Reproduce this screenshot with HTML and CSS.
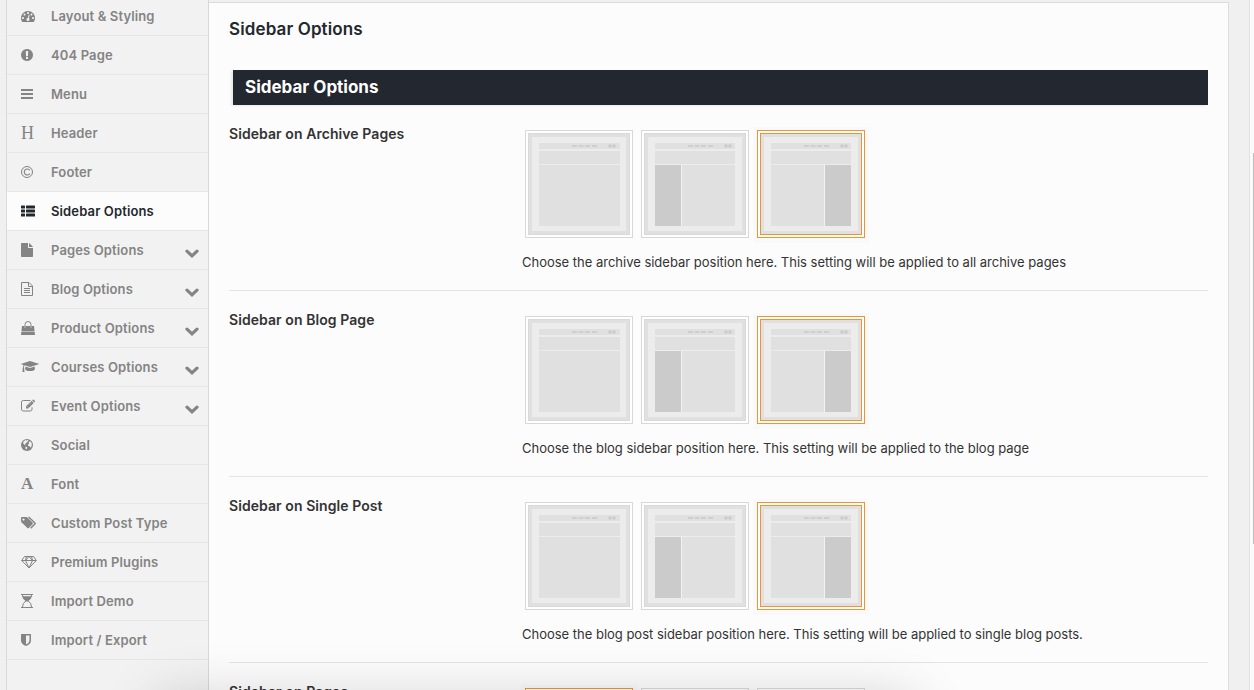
FILE: index.html
```
<!DOCTYPE html>
<html lang="en">
<head>
<meta charset="utf-8">
<title>Sidebar Options</title>
<link rel="stylesheet" href="styles.css">
</head>
<body>
<svg class="defs" width="0" height="0">
  <symbol id="tile-base" viewBox="0 0 102 102">
    <rect width="102" height="102" fill="#d9d9d9"/>
    <rect x="1" y="1" width="100" height="100" fill="#e0e0e0"/>
    <rect x="4" y="4" width="94" height="94" fill="#ececec"/>
    <rect x="11" y="10" width="81" height="6" fill="#e0e0e0"/>
    <rect x="11" y="18" width="81" height="13" fill="#e0e0e0"/>
    <rect x="11" y="32" width="81" height="61" fill="#e0e0e0"/>
    <path d="M44 13h5M50.500 13h5M57 13h5M64 13h5" stroke="#cfcfcf" stroke-width="2"/>
    <path d="M80.500 13h3M84.500 13h3" stroke="#cacaca" stroke-width="3"/>
  </symbol>
  <symbol id="tile-none" viewBox="0 0 102 102"><use href="#tile-base"/></symbol>
  <symbol id="tile-left" viewBox="0 0 102 102"><use href="#tile-base"/><path d="M11 32h26v61H11z" fill="#cbcbcb"/><path d="M37 32h1v61h-1z" fill="#f2f2f2"/><path d="M91 10h1v83h-1z" fill="#ececec"/></symbol>
  <symbol id="tile-right" viewBox="0 0 102 102"><use href="#tile-base"/><path d="M65 32h26v61H65z" fill="#cbcbcb"/><path d="M64 32h1v61h-1z" fill="#f2f2f2"/><path d="M91 10h1v83h-1z" fill="#ececec"/></symbol>
  <symbol id="chevron" viewBox="0 0 14 10"><path d="M2 2.200l5 4.700 5-4.700" fill="none" stroke="#848484" stroke-width="3.200" stroke-linecap="round"/></symbol>
</svg>
<div class="page">
  <nav class="menu">
    <a class="item"><svg class="icon" viewBox="0 0 1792 1792"><path d="M384 1152q0-53-37.500-90.500t-90.500-37.500-90.500 37.500-37.500 90.500 37.500 90.500 90.500 37.500 90.500-37.500 37.500-90.500zm192-448q0-53-37.500-90.500t-90.500-37.500-90.500 37.500-37.500 90.500 37.500 90.500 90.500 37.500 90.500-37.500 37.500-90.500zm428 481l101-382q6-26-7.500-48.500t-38.500-29.500-48 6.500-30 39.500l-101 382q-60 5-107 43.500t-63 98.500q-20 77 20 146t117 89 146-20 89-117q16-60-6-117t-72-91zm660-33q0-53-37.500-90.500t-90.500-37.500-90.500 37.500-37.500 90.500 37.500 90.500 90.500 37.500 90.500-37.500 37.500-90.500zm-640-640q0-53-37.500-90.500t-90.500-37.500-90.500 37.500-37.500 90.500 37.500 90.500 90.500 37.500 90.500-37.500 37.500-90.500zm448 192q0-53-37.500-90.500t-90.500-37.500-90.500 37.500-37.500 90.500 37.500 90.500 90.500 37.500 90.500-37.500 37.500-90.500zm320 448q0 261-141 483-19 29-54 29h-1402q-35 0-54-29-141-221-141-483 0-182 71-348t191-286 286-191 348-71 348 71 286 191 191 286 71 348z"/></svg><span>Layout &amp; Styling</span></a>
    <a class="item"><svg class="icon" viewBox="128 0 1792 1792"><path d="M896 128q209 0 385.500 103t279.500 279.500 103 385.500-103 385.500-279.500 279.500-385.500 103-385.500-103-279.500-279.500-103-385.500 103-385.500 279.500-279.500 385.500-103zm128 1247v-190q0-14-9-23.500t-22-9.500h-192q-13 0-23 10t-10 23v190q0 13 10 23t23 10h192q13 0 22-9.500t9-23.500zm-2-344l18-621q0-12-10-18-10-8-24-8h-220q-14 0-24 8-10 6-10 18l17 621q0 10 10 17.500t24 7.500h185q14 0 23.500-7.500t10.500-17.500z"/></svg><span>404 Page</span></a>
    <a class="item"><svg class="icon" viewBox="0 0 14 14"><path d="M0 2h12v2H0zM0 6h12v2H0zM0 10h12v2H0z"/></svg><span>Menu</span></a>
    <a class="item"><span class="icon letter">H</span><span>Header</span></a>
    <a class="item"><svg class="icon" viewBox="0 0 14 14"><g fill="none" stroke="#848484"><circle cx="6" cy="7" r="5.500"/><path d="M8.800 5.400A3 3 0 1 0 8.800 8.600" stroke-width="1.100"/></g></svg><span>Footer</span></a>
    <a class="item active"><svg class="icon" viewBox="0 0 14 14"><rect y="1.500" width="4" height="3" rx=".6"/><rect y="5.500" width="4" height="3" rx=".6"/><rect y="9.500" width="4" height="3" rx=".6"/><rect x="5" y="1.500" width="9" height="3" rx=".6"/><rect x="5" y="5.500" width="9" height="3" rx=".6"/><rect x="5" y="9.500" width="9" height="3" rx=".6"/></svg><span>Sidebar Options</span></a>
    <a class="item"><svg class="icon" viewBox="0 0 14 14"><path d="M.7 0H7v4.300q0 .7.700.7H12v8.300q0 .7-.7.700H.7q-.7 0-.7-.7V.7Q0 0 .7 0zM8 .1q.4.100.7.400l2.800 2.800q.3.300.4.700H8z"/></svg><span>Pages Options</span><svg class="chev"><use href="#chevron"/></svg></a>
    <a class="item"><svg class="icon" viewBox="0 0 14 14"><path d="M.5.500H8l3.500 3.500v9.500H.5zM7.500.5v4h4M3 6.500h6M3 8.500h6M3 10.500h6" fill="none" stroke="#848484"/></svg><span>Blog Options</span><svg class="chev"><use href="#chevron"/></svg></a>
    <a class="item"><svg class="icon" viewBox="0 0 14 14"><path d="M4 6V3.500a3 3 0 0 1 6 0V6" fill="none" stroke="#848484"/><path d="M1 5h2.500v1.500h1V5h5v1.500h1V5H13l.6 5.500H.4zM.3 11h13.400l.3 2.400q0 .6-.6.600H.6q-.6 0-.6-.6z"/></svg><span>Product Options</span><svg class="chev"><use href="#chevron"/></svg></a>
    <a class="item"><svg class="icon wide" viewBox="0 0 18 14"><path d="M9 1l8.700 2.700q.4.200 0 .5L9 7 3.800 5.300Q2.900 6 2.800 7.500q.9.600.3 1.600L3.600 12H1.300l.5-2.900q-.7-.9.200-1.600 0-1.600.7-2.500L.3 4.200q-.4-.3 0-.5zM4.400 6.600L9 8l4.600-1.400.3 2.600Q13.600 11 9 11T4.100 9.200z"/></svg><span>Courses Options</span><svg class="chev"><use href="#chevron"/></svg></a>
    <a class="item"><svg class="icon" viewBox="0 0 14 14"><path d="M9.400 1.500H2.300Q.5 1.500.5 3.300v6.900Q.5 12 2.300 12h6.900Q11 12 11 10.200V8.300" fill="none" stroke="#848484"/><path d="M10.600 1.800l2.100 2.100L7.200 9.500H5V7.300zM11.100 1.300l.6-.6q.5-.4 1 0l1.100 1.100q.4.500 0 1l-.6.600z"/><path d="M6 7.400l1 1" stroke="#f2f2f2" stroke-width=".7"/><path d="M7.300 6.200l3.200-3.200" stroke="#f2f2f2" stroke-width=".4"/></svg><span>Event Options</span><svg class="chev"><use href="#chevron"/></svg></a>
    <a class="item"><svg class="icon" viewBox="0 0 14 14"><circle cx="6" cy="7" r="6"/><path d="M4.600 2l1.300.5.700-.4 1 .4-1 1.100-.8 1-1.200.6-.5 1 .6.800-1.300-.3L2 5l.6-1.600zM8.400 3.500l1.500.3 1 2.300-.4 2.100-1 1.500-.8-1.500L7.200 8l-.2-1.500 1.200-1-.5-.8zM4.500 8.400l1.500.7.300 1-1.100 1.600-.7-1.300z" fill="#f2f2f2"/></svg><span>Social</span></a>
    <a class="item"><span class="icon letter bold">A</span><span>Font</span></a>
    <a class="item"><svg class="icon wide" viewBox="0 0 18 14"><path fill-rule="evenodd" d="M1 1h4.300q.8.100 1.400.7l5 5q.6.700 0 1.400l-3.900 3.900q-.7.600-1.400 0l-5.700-5.600Q0 5.800 0 5V2Q0 1 1 1zm1.500 1.400a1.100 1.100 0 1 0 .01 0z"/><path d="M7.500 1.300q.6.100 1 .5l5.400 5.300q.5.500 0 1L9.700 12.300" fill="none" stroke="#848484" stroke-width="1.400"/></svg><span>Custom Post Type</span></a>
    <a class="item"><svg class="icon wide" viewBox="0 0 18 14"><path d="M3.500 1.500h9L15.300 5.500 8 13 .7 5.500zM.7 5.500h14.600M5.500 1.500l-1 4L8 13l3.500-7.500-1-4M4.500 5.500L8 1.500l3.500 4" fill="none" stroke="#848484" stroke-linejoin="round"/></svg><span>Premium Plugins</span></a>
    <a class="item"><svg class="icon" viewBox="0 0 14 14"><path d="M0 0h12v1H0zM0 13h12v1H0zM1 1h10q0 3.600-3.700 6h-2.600Q1 4.600 1 1z"/><path d="M1.500 13q0-3.800 3.300-6h2.400q3.300 2.200 3.300 6" fill="none" stroke="#848484"/><path d="M2 1h8l-.3 1.200H2.300z" fill="#f2f2f2"/></svg><span>Import Demo</span></a>
    <a class="item"><svg class="icon" viewBox="0 0 14 14"><path fill-rule="evenodd" d="M.5 1h9q.5 0 .5.500v6Q10 11 5 13 0 11 0 7.500v-6Q0 1 .5 1zM5 2.500v8.900q3.500-1.800 3.500-3.900v-5z"/></svg><span>Import / Export</span></a>
  </nav>
  <main class="panel">
    <h1 class="title">Sidebar Options</h1>
    <h2 class="banner">Sidebar Options</h2>
    <section class="option">
      <h3 class="label">Sidebar on Archive Pages</h3>
      <div class="field">
        <div class="tiles"><svg class="tile"><use href="#tile-none"/></svg><svg class="tile"><use href="#tile-left"/></svg><svg class="tile selected"><use href="#tile-right"/></svg></div>
        <p class="hint">Choose the archive sidebar position here. This setting will be applied to all archive pages</p>
      </div>
    </section>
    <section class="option">
      <h3 class="label">Sidebar on Blog Page</h3>
      <div class="field">
        <div class="tiles"><svg class="tile"><use href="#tile-none"/></svg><svg class="tile"><use href="#tile-left"/></svg><svg class="tile selected"><use href="#tile-right"/></svg></div>
        <p class="hint">Choose the blog sidebar position here. This setting will be applied to the blog page</p>
      </div>
    </section>
    <section class="option">
      <h3 class="label">Sidebar on Single Post</h3>
      <div class="field">
        <div class="tiles"><svg class="tile"><use href="#tile-none"/></svg><svg class="tile"><use href="#tile-left"/></svg><svg class="tile selected"><use href="#tile-right"/></svg></div>
        <p class="hint">Choose the blog post sidebar position here. This setting will be applied to single blog posts.</p>
      </div>
    </section>
    <section class="option">
      <h3 class="label">Sidebar on Pages</h3>
      <div class="field">
        <div class="tiles"><svg class="tile selected"><use href="#tile-none"/></svg><svg class="tile"><use href="#tile-left"/></svg><svg class="tile"><use href="#tile-right"/></svg></div>
      </div>
    </section>
  </main>
  <div class="scroll"><div class="thumb"></div></div>
  <div class="dock-shadow"></div>
</div>
</body>
</html>
```
FILE: styles.css
```
* { box-sizing: border-box; }
html, body { margin: 0; height: 690px; overflow: hidden; }
body { background: #f0f0f0; font-family: Inter, "Liberation Sans", sans-serif; color: #333; }
.defs { display: block; }
.page { display: flex; position: relative; width: 1254px; height: 690px; padding-left: 6px; overflow: hidden; }

.menu { width: 203px; height: 693px; margin-top: -3px; flex: none; background: #f2f2f2; border-left: 1px solid #dadada; border-right: 1px solid #d8d8d8; }
.item { display: flex; align-items: center; height: 39px; padding: 0 9px 0 14px; border-bottom: 1px solid #e6e6e6; color: #848484; font-size: 13px; font-weight: 600; letter-spacing: .13px; white-space: nowrap; }
.item.active { background: #fcfcfc; color: #23282d; }
.icon { width: 14px; height: 14px; flex: none; margin-right: 16px; fill: currentColor; overflow: visible; }
.icon.wide { width: 18px; margin-right: 12px; }
.letter { font: 18px/14px "Liberation Serif", serif; letter-spacing: 0; }
.letter.bold { font-weight: 700; font-size: 17px; }
.chev { width: 14px; height: 10px; margin: 7px 0 0 auto; }

.panel { width: 1020px; flex: none; margin-top: 2px; padding: 0 20px; background: #fcfcfc; border-top: 1px solid #ddd; border-right: 1px solid #ddd; }
.title { margin: 14px 0 0; font-size: 17px; line-height: 24px; font-weight: 600; color: #23282d; letter-spacing: .12px; }
.banner { margin: 29px 0 0 4px; height: 35px; padding-left: 12px; background: #23272f; color: #fff; font-size: 17px; line-height: 34px; font-weight: 700; box-shadow: -2px 1px 2px rgba(0,0,0,.08); }
.option { display: flex; height: 186px; padding-top: 25px; border-bottom: 1px solid #e4e4e4; }
.label { width: 293px; flex: none; margin: -6px 0 0; font-size: 14px; line-height: 20px; font-weight: 600; letter-spacing: .07px; color: #333; }
.tiles { display: flex; gap: 8px; margin-left: 3px; }
.tile { width: 108px; height: 108px; padding: 2px; border: 1px solid #d8d8d8; background: #fff; }
.tile.selected { border-color: #ee9430; box-shadow: 0 1px 0 4px #f9f9f9; outline: 1px solid #ee9430; outline-offset: -4px; }
.hint { margin: 14px 0 0; font-size: 13px; line-height: 20px; white-space: nowrap; color: #333; letter-spacing: -.01px; }

.scroll { width: 5px; margin-left: auto; background: #fafafa; border-left: 1px solid #e2e2e2; padding: 153px 0 0 3px; }
.thumb { height: 391px; background: #bdbdbd; }
.dock-shadow { position: absolute; left: 160px; top: 704px; width: 750px; height: 60px; box-shadow: 0 0 56px 4px rgba(0,0,0,.19); pointer-events: none; }
```
